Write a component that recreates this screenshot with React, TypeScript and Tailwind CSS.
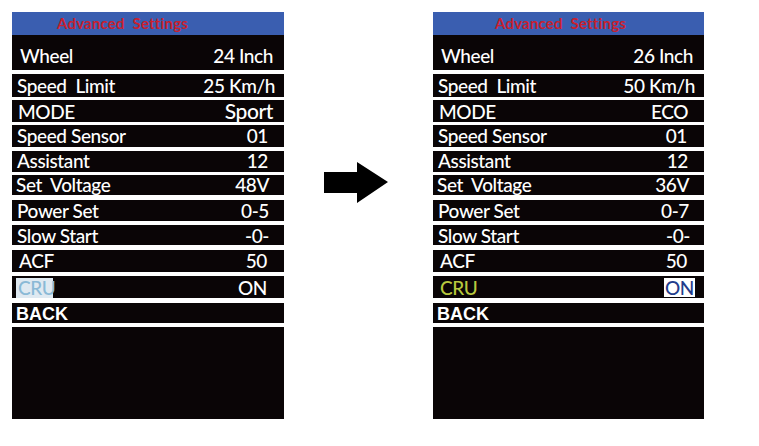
import React from "react";

type Row = {
  label: string;
  value: string;
  row: string; // height + top gap
  pb: string;
  pr: string;
  pl: string;
  big?: boolean;
};

const rowsLayout = [
  { row: "h-[35px]", pb: "pb-[5px]", pl: "pl-[8px]" },
  { row: "h-[23px] mt-[4px]", pb: "pb-[2px]", pl: "pl-[5px]" },
  { row: "h-[22px] mt-[3px]", pb: "pb-[1px]", pl: "pl-[6px]" },
  { row: "h-[22px] mt-[3px]", pb: "pb-[2px]", pl: "pl-[5px]" },
  { row: "h-[21px] mt-[4px]", pb: "pb-[2px]", pl: "pl-[5px]" },
  { row: "h-[20px] mt-[3px]", pb: "pb-[1px]", pl: "pl-[4px]" },
  { row: "h-[21px] mt-[5px]", pb: "pb-[1px]", pl: "pl-[5px]" },
  { row: "h-[20px] mt-[4px]", pb: "pb-0", pl: "pl-[5px]" },
  { row: "h-[22px] mt-[5px]", pb: "pb-[2px]", pl: "pl-[7px]" },
];

const leftRows: Row[] = [
  ["Wheel", "24 Inch", "pr-[11px]"],
  ["Speed  Limit", "25 Km/h", "pr-[9px]"],
  ["MODE", "Sport", "pr-[11px]"],
  ["Speed Sensor", "01", "pr-[16px]"],
  ["Assistant", "12", "pr-[16px]"],
  ["Set  Voltage", "48V", "pr-[15px]"],
  ["Power Set", "0-5", "pr-[15px]"],
  ["Slow Start", "-0-", "pr-[15px]"],
  ["ACF", "50", "pr-[17px]"],
].map(([label, value, pr], i) => ({ label, value, pr, ...rowsLayout[i], big: i === 2 }));

const rightRows: Row[] = [
  ["Wheel", "26 Inch", "pr-[11px]"],
  ["Speed  Limit", "50 Km/h", "pr-[9px]"],
  ["MODE", "ECO", "pr-[16px]"],
  ["Speed Sensor", "01", "pr-[17px]"],
  ["Assistant", "12", "pr-[16px]"],
  ["Set  Voltage", "36V", "pr-[15px]"],
  ["Power Set", "0-7", "pr-[15px]"],
  ["Slow Start", "-0-", "pr-[14px]"],
  ["ACF", "50", "pr-[17px]"],
].map(([label, value, pr], i) => ({ label, value, pr, ...rowsLayout[i] }));

function Panel({ rows, headerPad, right }: { rows: Row[]; headerPad: string; right?: boolean }) {
  return (
    <div className={`flex flex-col bg-white ${right ? "w-[271px]" : "w-[272px]"}`}>
      {/* header */}
      <div className={`flex h-[23px] items-center bg-[#3a5eb0] ${headerPad}`}>
        <span className="font-['Lato',sans-serif] text-[15px] font-bold leading-none tracking-[0.2px] text-[#c8202e]">
          Advanced&nbsp; Settings
        </span>
      </div>

      {rows.map((r) => (
        <div
          key={r.label}
          className={`flex items-end justify-between bg-[#0a0506] font-['Lato',sans-serif] font-medium tracking-[-0.4px] text-white ${r.row}`}
        >
          <span className={`whitespace-pre leading-none text-[19px] ${r.pl} ${r.pb}`}>{r.label}</span>
          <span className={`whitespace-pre leading-none ${r.big ? "text-[21px]" : "text-[19px]"} ${r.pr} ${r.pb}`}>
            {r.value}
          </span>
        </div>
      ))}

      {/* CRU */}
      <div className="mt-[4px] flex h-[22px] items-end justify-between bg-[#0a0506] font-['Lato',sans-serif] font-medium tracking-[-0.4px]">
        {right ? (
          <span className="pl-[7px] pb-[1px] text-[19px] leading-none text-[#b8c93e]">CRU</span>
        ) : (
          <span className="ml-[4px] flex h-[20px] w-[37px] items-end bg-[#dfe9f1] pl-[2px] pb-[1px] text-[19px] leading-none text-[#8ab9d6]">
            CRU
          </span>
        )}
        {right ? (
          <span className="mr-[9px] mb-[1px] flex h-[19px] w-[31px] items-end bg-white pl-[1px] text-[19px] leading-none text-[#233c8c]">
            ON
          </span>
        ) : (
          <span className="pr-[17px] pb-[1px] text-[19px] leading-none text-white">ON</span>
        )}
      </div>

      {/* BACK */}
      <div className="mt-[5px] flex h-[20px] items-end bg-[#0a0506]">
        <span className="pl-[4px] font-['Liberation_Sans',Arial,sans-serif] text-[18px] font-bold leading-none text-white">
          BACK
        </span>
      </div>

      <div className="mt-[4px] h-[92px] bg-[#0a0506]" />
    </div>
  );
}

export default function App() {
  return (
    <div className="flex h-[446px] w-[759px] items-start bg-white pt-[12px] pl-[12px]">
      <Panel rows={leftRows} headerPad="pl-[45px]" />
      <svg className="mt-[150px] ml-[40px]" width="64" height="42" viewBox="0 0 64 42">
        <polygon points="0,10 33,10 33,0 64,20 33,41 33,31 0,31" fill="#000" />
      </svg>
      <div className="ml-[45px]">
        <Panel rows={rightRows} headerPad="pl-[62px]" right />
      </div>
    </div>
  );
}
